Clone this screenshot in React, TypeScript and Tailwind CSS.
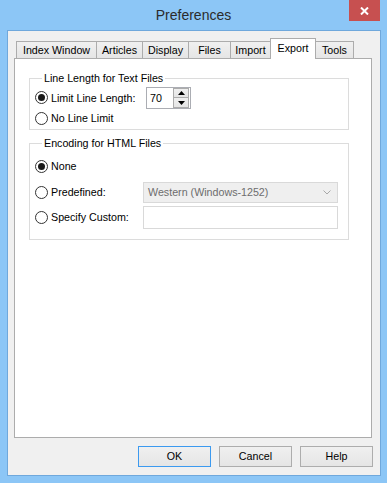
import React from "react";

type TabProps = { label: string; w: string; selected?: boolean; first?: boolean };

function Tab({ label, w, selected, first }: TabProps) {
    if (selected) {
        return (
            <div className={`${w} ${first ? "" : "-ml-px"} relative z-10 flex h-[21px] items-center justify-center border border-b-0 border-[#acacac] bg-white pb-[1px]`}>
                {label}
            </div>
        );
    }
    return (
        <div className={`${w} ${first ? "" : "-ml-px"} mb-[1px] flex h-[17px] items-center justify-center border border-b-0 border-[#acacac] bg-linear-to-b from-[#f0f0f0] to-[#e5e5e5]`}>
            {label}
        </div>
    );
}

function Radio({ checked }: { checked?: boolean }) {
    return (
        <div className="flex h-[13px] w-[13px] shrink-0 items-center justify-center rounded-full border border-[#333333] bg-white">
            {checked && <div className="h-[7px] w-[7px] rounded-full bg-[#1a1a1a]" />}
        </div>
    );
}

function Button({ label, def }: { label: string; def?: boolean }) {
    return (
        <div className={`flex h-[21px] w-[73px] items-center justify-center border bg-linear-to-b from-[#f0f0f0] to-[#e5e5e5] ${def ? "border-[#3c9af0]" : "border-[#adadad]"}`}>
            {label}
        </div>
    );
}

export default function App() {
    return (
        <div className="flex h-[483px] w-[387px] flex-col bg-[#8cc6f6] font-['Liberation_Sans',Arial,sans-serif] text-[10.7px] text-black">
            {/* title bar */}
            <div className="grid h-[30px] grid-cols-[1fr_auto_1fr] px-[7px]">
                <div />
                <div className="self-center text-[14px] text-[#2b2b2b]">Preferences</div>
                <div className="flex h-[21px] w-[31px] items-center justify-center justify-self-end bg-[#c75050]">
                    <svg width="9" height="8" viewBox="0 0 9 8">
                        <path d="M1 0.5 L8 7.5 M8 0.5 L1 7.5" stroke="white" strokeWidth="2" />
                    </svg>
                </div>
            </div>

            {/* client */}
            <div className="ml-[7px] flex h-[446px] w-[374px] flex-col border border-[#6fa8dc] bg-[#f0f0f0] pl-[6px] pr-[8px] pt-[7px]">
                <div className="relative z-10 -mb-px ml-[2px] flex h-[21px] items-end">
                    <Tab label="Index Window" w="w-[81px]" first />
                    <Tab label="Articles" w="w-[47px]" />
                    <Tab label="Display" w="w-[47px]" />
                    <Tab label="Files" w="w-[43px]" />
                    <Tab label="Import" w="w-[41px]" />
                    <Tab label="Export" w="w-[46px]" selected />
                    <Tab label="Tools" w="w-[39px]" />
                </div>

                <div className="flex h-[380px] flex-col border border-[#acacac] bg-white">
                    <fieldset className="ml-[14px] mt-[13px] w-[320px] border border-[#dcdcdc] pb-[3px] pl-[5px] pt-[2px]">
                        <legend className="ml-[7px] px-[2px] leading-[13px]">Line Length for Text Files</legend>
                        <div className="flex h-[22px] items-center">
                            <div className="flex w-[111px] items-center gap-[3px]">
                                <Radio checked />
                                <span>Limit Line Length:</span>
                            </div>
                            <div className="flex h-[22px] w-[45px] items-center border border-[#abadb3] bg-white pl-[3px]">
                                <span className="flex-1">70</span>
                                <div className="mr-[1px] flex flex-col">
                                    <div className="flex h-[10px] w-[16px] items-center justify-center border border-[#acacac] bg-linear-to-b from-[#f0f0f0] to-[#e5e5e5]">
                                        <svg width="7" height="4" viewBox="0 0 7 4"><path d="M3.5 0 L7 4 L0 4 Z" fill="#000" /></svg>
                                    </div>
                                    <div className="flex h-[10px] w-[16px] items-center justify-center border border-t-0 border-[#acacac] bg-linear-to-b from-[#f0f0f0] to-[#e5e5e5]">
                                        <svg width="7" height="4" viewBox="0 0 7 4"><path d="M0 0 L7 0 L3.5 4 Z" fill="#000" /></svg>
                                    </div>
                                </div>
                            </div>
                        </div>
                        <div className="mt-[1px] flex h-[16px] items-center gap-[3px]">
                            <Radio />
                            <span>No Line Limit</span>
                        </div>
                    </fieldset>

                    <fieldset className="ml-[14px] mt-[7px] w-[320px] border border-[#dcdcdc] pb-[10px] pl-[5px] pt-[8px]">
                        <legend className="ml-[7px] px-[2px] leading-[13px]">Encoding for HTML Files</legend>
                        <div className="flex h-[17px] items-center gap-[3px]">
                            <Radio checked />
                            <span>None</span>
                        </div>
                        <div className="mt-[7px] flex h-[21px] items-center">
                            <div className="flex w-[108px] items-center gap-[3px]">
                                <Radio />
                                <span>Predefined:</span>
                            </div>
                            <div className="flex h-[21px] w-[195px] items-center border border-[#d9d9d9] bg-[#efefef] pl-[4px] pr-[6px] text-[#6d6d6d]">
                                <span className="flex-1">Western (Windows-1252)</span>
                                <svg width="8" height="5" viewBox="0 0 8 5"><path d="M0.5 0.5 L4 4 L7.5 0.5" stroke="#a8a8a8" strokeWidth="1" fill="none" /></svg>
                            </div>
                        </div>
                        <div className="mt-[3px] flex h-[23px] items-center">
                            <div className="flex w-[108px] items-center gap-[3px]">
                                <Radio />
                                <span>Specify Custom:</span>
                            </div>
                            <div className="h-[23px] w-[195px] border border-[#d9d9d9] bg-white" />
                        </div>
                    </fieldset>
                </div>

                <div className="-mr-px mt-[8px] flex justify-end gap-[8px]">
                    <Button label="OK" def />
                    <Button label="Cancel" />
                    <Button label="Help" />
                </div>
            </div>
        </div>
    );
}
